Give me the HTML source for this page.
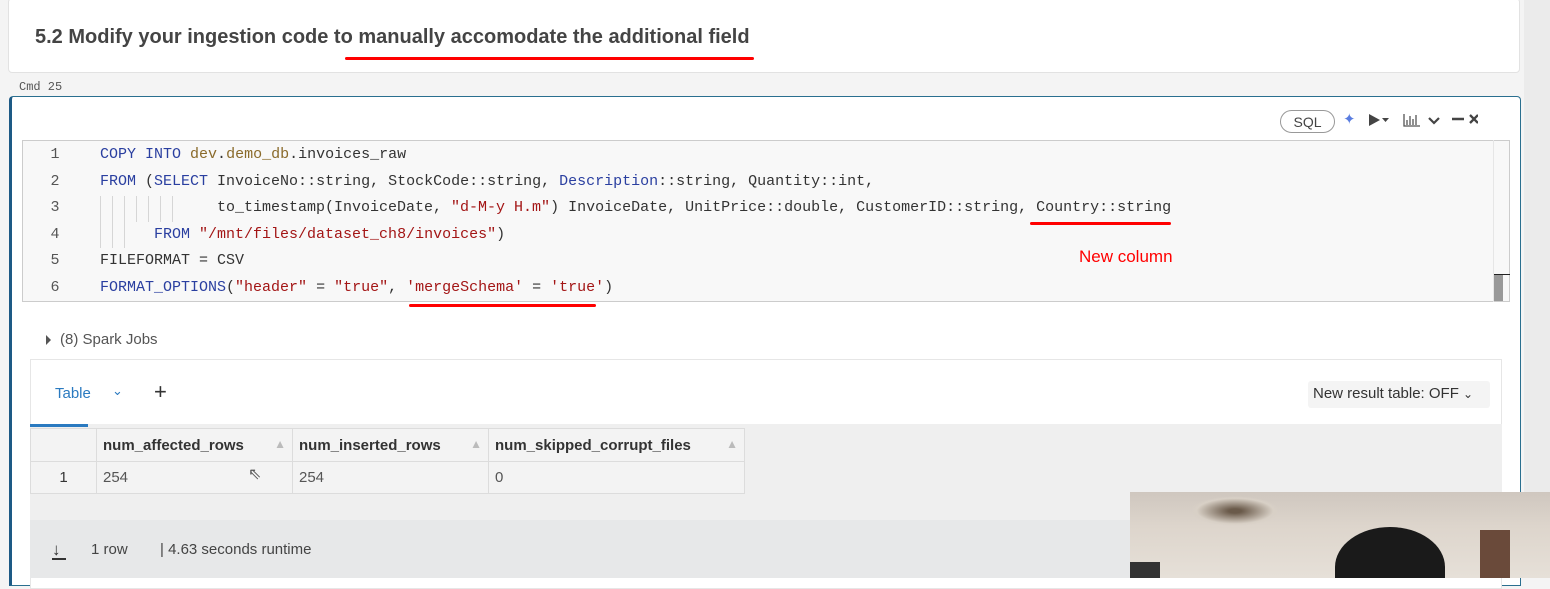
<!DOCTYPE html>
<html><head><meta charset="utf-8"><style>
*{margin:0;padding:0;box-sizing:border-box}
body{width:1550px;height:578px;overflow:hidden;background:#f4f4f4;position:relative;font-family:"Liberation Sans",sans-serif}
.abs{position:absolute}
.mono{font-family:"Liberation Mono",monospace;font-size:15px;color:#333;white-space:pre}
.k{color:#2a3fa0}.s{color:#a31515}.o{color:#8a6a2a}
.ln{position:absolute;left:40px;width:30px;text-align:center;color:#555;font-family:"Liberation Mono",monospace;font-size:15px}
.guide{position:absolute;width:1px;background:#d6d6d6}
th,td{border:1px solid #dcdcdc;text-align:left;font-weight:normal}
</style></head><body>
<div class="abs" style="left:1524px;top:0;width:26px;height:578px;background:#ebebeb"></div>
<!-- top card -->
<div class="abs" style="left:8px;top:-2px;width:1512px;height:75px;background:#fff;border:1px solid #e2e2e2;border-radius:4px"></div>
<div class="abs" style="left:35px;top:26px;font-size:20px;font-weight:bold;color:#444">5.2 Modify your ingestion code to manually accomodate the additional field</div>
<div class="abs" style="left:345px;top:57px;width:409px;height:3px;background:#f00;border-radius:2px"></div>
<div class="abs" style="left:19px;top:80px;font-family:'Liberation Mono',monospace;font-size:12px;color:#555">Cmd 25</div>
<!-- cell -->
<div class="abs" style="left:9px;top:96px;width:1512px;height:490px;background:#fff;border:1px solid #2a6f8f;border-left:3px solid #1d5a85;border-radius:4px 4px 0 0"></div>
<!-- toolbar -->
<div class="abs" style="left:1280px;top:110px;width:55px;height:23px;border:1px solid #999;border-radius:12px;font-size:14px;color:#444;text-align:center;line-height:22px">SQL</div>
<div class="abs" style="left:1343px;top:110px;font-size:15px;color:#5a7de0">✦</div>
<svg class="abs" style="left:1368px;top:112px" width="110" height="18" viewBox="0 0 110 18">
<path d="M1 2 L12 8 L1 14Z" fill="#444"/><path d="M14 6 L21 6 L17.5 10Z" fill="#444"/>
<path d="M36 2 V14 H52 M39 13 V8 M42 13 V4 M45 13 V7 M48 13 V3" stroke="#555" stroke-width="1.3" fill="none"/>
<path d="M61 6 L66 11 L71 6" stroke="#444" stroke-width="2.2" fill="none"/>
<path d="M84 7 H96" stroke="#444" stroke-width="2.5"/>
<path d="M103 3 L111 11 M111 3 L103 11" stroke="#444" stroke-width="2.3" transform="translate(-1,0)"/>
</svg>
<!-- editor -->
<div class="abs" style="left:22px;top:140px;width:1488px;height:162px;background:#f8f8f8;border:1px solid #ccc"></div>
<div class="abs" style="left:1493px;top:140px;width:1px;height:162px;background:#e6e6e6"></div>
<div class="abs" style="left:1494px;top:274px;width:16px;height:1px;background:#222"></div>
<div class="abs" style="left:1494px;top:275px;width:9px;height:26px;background:#999"></div>
<div class="ln" style="top:146px">1</div><div class="ln" style="top:173px">2</div><div class="ln" style="top:199px">3</div><div class="ln" style="top:226px">4</div><div class="ln" style="top:252px">5</div><div class="ln" style="top:279px">6</div>
<div class="guide" style="left:100px;top:196px;height:52px"></div><div class="guide" style="left:112px;top:196px;height:52px"></div><div class="guide" style="left:124px;top:196px;height:52px"></div>
<div class="guide" style="left:136px;top:196px;height:26px"></div><div class="guide" style="left:148px;top:196px;height:26px"></div><div class="guide" style="left:160px;top:196px;height:26px"></div><div class="guide" style="left:172px;top:196px;height:26px"></div>
<div class="mono abs" style="left:100px;top:146px"><span class="k">COPY INTO</span> <span class="o">dev</span>.<span class="o">demo_db</span>.invoices_raw</div>
<div class="mono abs" style="left:100px;top:173px"><span class="k">FROM</span> (<span class="k">SELECT</span> InvoiceNo::string, StockCode::string, <span class="k">Description</span>::string, Quantity::int,</div>
<div class="mono abs" style="left:217px;top:199px">to_timestamp(InvoiceDate, <span class="s">"d-M-y H.m"</span>) InvoiceDate, UnitPrice::double, CustomerID::string, Country::string</div>
<div class="mono abs" style="left:154px;top:226px"><span class="k">FROM</span> <span class="s">"/mnt/files/dataset_ch8/invoices"</span>)</div>
<div class="mono abs" style="left:100px;top:252px">FILEFORMAT = CSV</div>
<div class="mono abs" style="left:100px;top:279px"><span class="k">FORMAT_OPTIONS</span>(<span class="s">"header"</span> = <span class="s">"true"</span>, <span class="s">'mergeSchema'</span> = <span class="s">'true'</span>)</div>
<div class="abs" style="left:1030px;top:222px;width:141px;height:3px;background:#f00;border-radius:2px"></div>
<div class="abs" style="left:409px;top:304px;width:187px;height:3px;background:#f00;border-radius:2px"></div>
<div class="abs" style="left:1079px;top:247px;font-size:17px;color:#f00">New column</div>
<!-- spark jobs -->
<div class="abs" style="left:46px;top:335px;width:0;height:0;border-left:5px solid #555;border-top:5px solid transparent;border-bottom:5px solid transparent"></div>
<div class="abs" style="left:60px;top:331px;font-size:15px;color:#555">(8) Spark Jobs</div>
<!-- results -->
<div class="abs" style="left:30px;top:359px;width:1472px;height:230px;background:#fff;border:1px solid #e6e6e6"></div>
<div class="abs" style="left:55px;top:385px;font-size:15px;color:#2a7ac0">Table</div>
<div class="abs" style="left:112px;top:383px;font-size:13px;color:#2a7ac0">⌄</div>
<div class="abs" style="left:154px;top:379px;font-size:22px;color:#333">+</div>
<div class="abs" style="left:1308px;top:381px;width:182px;height:27px;background:#f4f4f4;border-radius:3px"></div>
<div class="abs" style="left:1313px;top:385px;font-size:15px;color:#333">New result table: OFF <span style="font-size:12px">⌄</span></div>
<div class="abs" style="left:30px;top:424px;width:1472px;height:154px;background:#efefef"></div>
<div class="abs" style="left:30px;top:424px;width:58px;height:3px;background:#2a7ac0"></div>
<table class="abs" style="left:30px;top:428px;border-collapse:collapse;font-size:15px;color:#333;background:#f3f3f3">
<tr style="height:33px"><th style="width:66px"></th><th style="width:196px;padding-left:6px;font-weight:bold">num_affected_rows <span style="color:#bbb;font-size:12px;float:right;margin-right:6px">▲</span></th><th style="width:196px;padding-left:6px;font-weight:bold">num_inserted_rows <span style="color:#bbb;font-size:12px;float:right;margin-right:6px">▲</span></th><th style="width:256px;padding-left:6px;font-weight:bold">num_skipped_corrupt_files <span style="color:#bbb;font-size:12px;float:right;margin-right:6px">▲</span></th></tr>
<tr style="height:32px"><td style="text-align:center">1</td><td style="padding-left:6px;color:#555">254</td><td style="padding-left:6px;color:#555">254</td><td style="padding-left:6px;color:#555">0</td></tr>
</table>
<div class="abs" style="left:248px;top:464px;font-size:16px;color:#555">⇖</div>
<div class="abs" style="left:30px;top:520px;width:1472px;height:58px;background:#e7e8e9"></div>
<div class="abs" style="left:52px;top:540px;font-size:17px;color:#333">↓</div>
<div class="abs" style="left:52px;top:558px;width:14px;height:1.5px;background:#333"></div>
<div class="abs" style="left:91px;top:541px;font-size:15px;color:#444">1 row</div>
<div class="abs" style="left:160px;top:541px;font-size:15px;color:#444">| 4.63 seconds runtime</div>
<!-- video overlay -->
<div class="abs" style="left:1130px;top:492px;width:420px;height:86px;background:linear-gradient(180deg,#cfc7bf 0%,#ddd5cc 40%,#e6e0d8 100%);overflow:hidden">
<div class="abs" style="left:60px;top:4px;width:90px;height:30px;border-radius:50%;background:radial-gradient(#6a5a4a 10%,#d8d0c6 60%,transparent 70%)"></div>
<div class="abs" style="left:0;top:70px;width:30px;height:20px;background:#333"></div>
<div class="abs" style="left:205px;top:35px;width:110px;height:80px;border-radius:50% 50% 0 0;background:#1a1a1a"></div>
<div class="abs" style="left:350px;top:38px;width:30px;height:48px;background:#6a4a3a"></div>
</div>
</body></html>
